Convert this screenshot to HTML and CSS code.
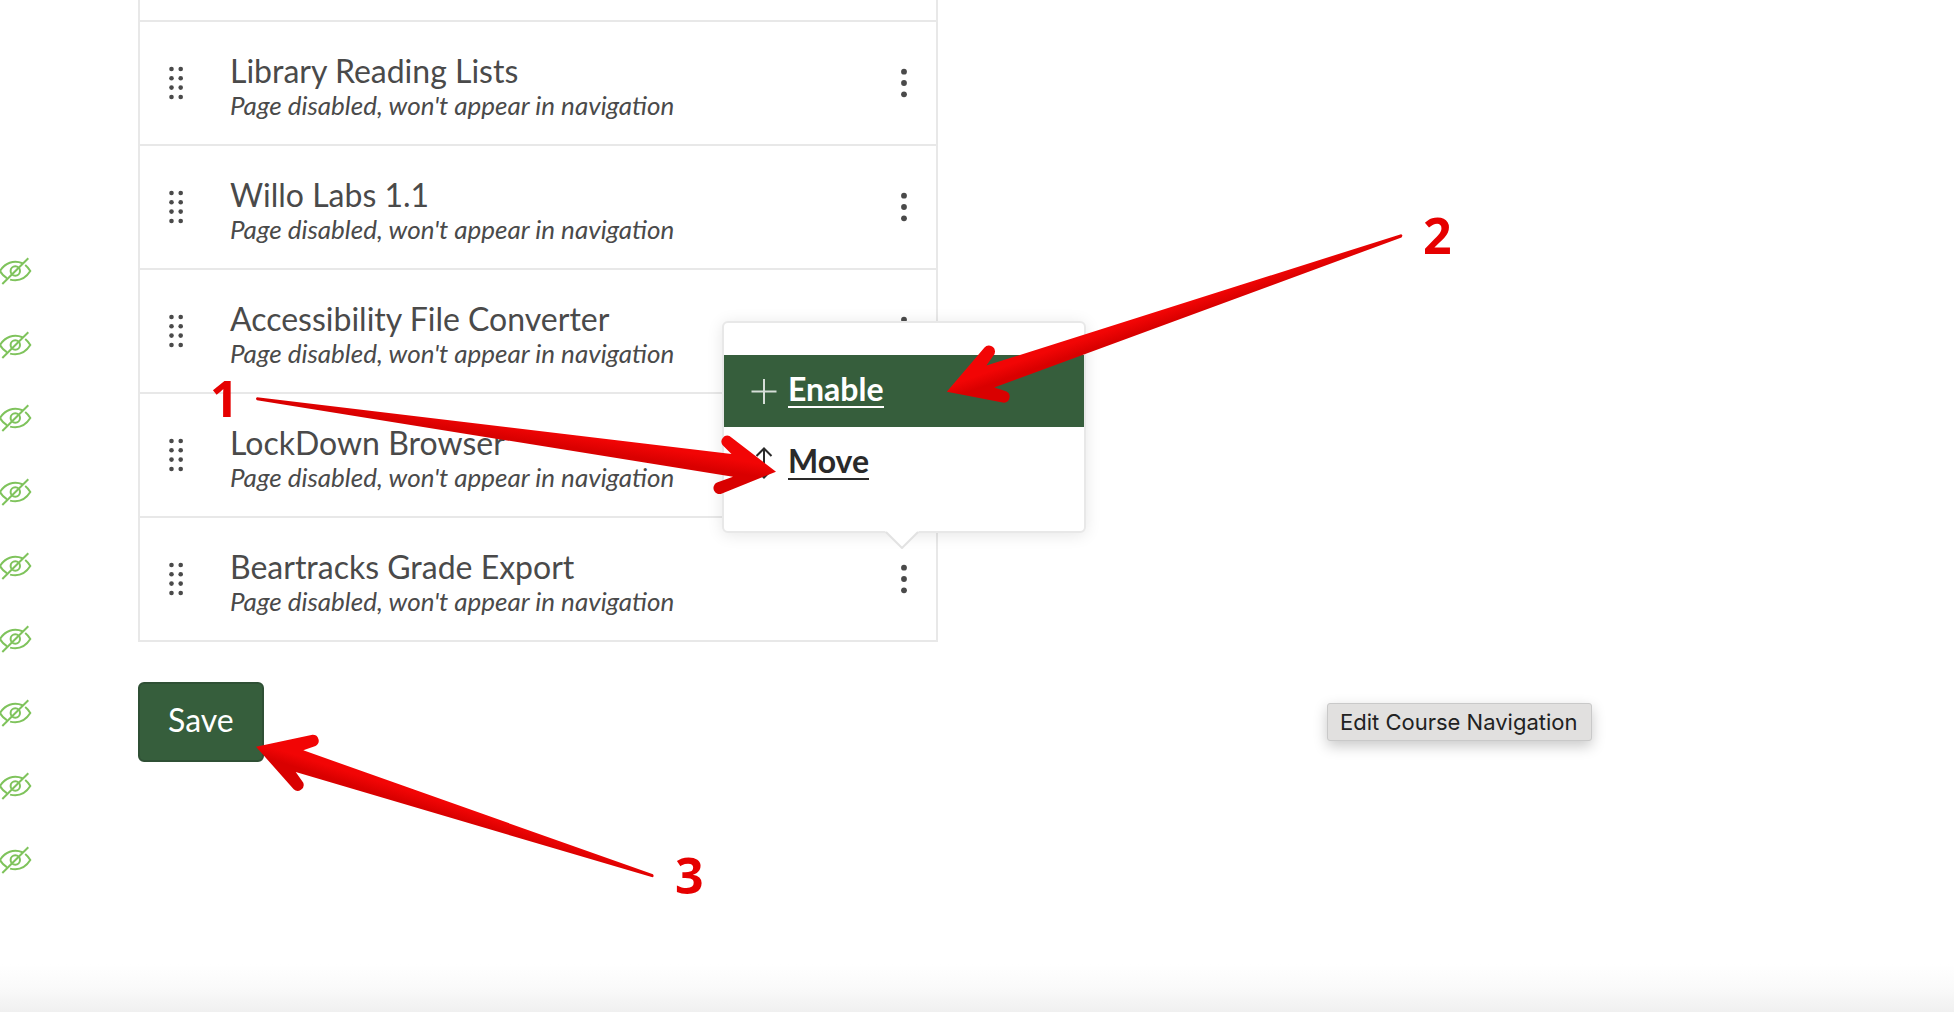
FILE: index.html
```html
<!DOCTYPE html>
<html lang="en">
<head>
<meta charset="utf-8">
<title>Course Navigation</title>
<link rel="stylesheet" href="styles.css">
</head>
<body>
<svg class="defs" aria-hidden="true">
  <symbol id="hidden-eye" viewBox="0 0 32 30">
    <path d="M22.500 7.200C13.500 3.600 5 7 0 15c1.600 2.900 4 5.400 6.800 7.200M25.200 9c2 1.600 3.700 3.700 5.100 6-4.800 7.600-12 10.600-20.200 8.600M2.300 28 28.300 2.300"/>
    <circle cx="15.300" cy="15" r="4.700"/>
  </symbol>
  <symbol id="drag" viewBox="0 0 16 34">
    <circle cx="3.500" cy="3" r="2.300"/><circle cx="12.700" cy="3" r="2.300"/>
    <circle cx="3.500" cy="12.300" r="2.300"/><circle cx="12.700" cy="12.300" r="2.300"/>
    <circle cx="3.500" cy="21.600" r="2.300"/><circle cx="12.700" cy="21.600" r="2.300"/>
    <circle cx="3.500" cy="31" r="2.300"/><circle cx="12.700" cy="31" r="2.300"/>
  </symbol>
  <symbol id="more" viewBox="0 0 8 32">
    <circle cx="4" cy="4.700" r="2.900"/><circle cx="4" cy="16" r="2.900"/><circle cx="4" cy="27.300" r="2.900"/>
  </symbol>
</svg>
<div class="page">
  <aside class="rail">
    <svg class="eye"><use href="#hidden-eye"/></svg>
    <svg class="eye"><use href="#hidden-eye"/></svg>
    <svg class="eye"><use href="#hidden-eye"/></svg>
    <svg class="eye"><use href="#hidden-eye"/></svg>
    <svg class="eye"><use href="#hidden-eye"/></svg>
    <svg class="eye"><use href="#hidden-eye"/></svg>
    <svg class="eye"><use href="#hidden-eye"/></svg>
    <svg class="eye"><use href="#hidden-eye"/></svg>
    <svg class="eye"><use href="#hidden-eye"/></svg>
  </aside>
  <main class="content">
    <ul class="nav-list">
      <li class="nav-item">
        <svg class="drag"><use href="#drag"/></svg>
        <div class="label"><span class="title">Library Reading Lists</span><em class="note">Page disabled, won't appear in navigation</em></div>
        <button class="more" type="button" aria-label="Settings for Library Reading Lists"><svg class="dots"><use href="#more"/></svg></button>
      </li>
      <li class="nav-item">
        <svg class="drag"><use href="#drag"/></svg>
        <div class="label"><span class="title">Willo Labs 1.1</span><em class="note">Page disabled, won't appear in navigation</em></div>
        <button class="more" type="button" aria-label="Settings for Willo Labs 1.1"><svg class="dots"><use href="#more"/></svg></button>
      </li>
      <li class="nav-item">
        <svg class="drag"><use href="#drag"/></svg>
        <div class="label"><span class="title">Accessibility File Converter</span><em class="note">Page disabled, won't appear in navigation</em></div>
        <button class="more" type="button" aria-label="Settings for Accessibility File Converter"><svg class="dots"><use href="#more"/></svg></button>
      </li>
      <li class="nav-item">
        <svg class="drag"><use href="#drag"/></svg>
        <div class="label"><span class="title">LockDown Browser</span><em class="note">Page disabled, won't appear in navigation</em></div>
        <button class="more" type="button" aria-label="Settings for LockDown Browser"><svg class="dots"><use href="#more"/></svg></button>
      </li>
      <li class="nav-item">
        <svg class="drag"><use href="#drag"/></svg>
        <div class="label"><span class="title">Beartracks Grade Export</span><em class="note">Page disabled, won't appear in navigation</em></div>
        <button class="more" type="button" aria-label="Settings for Beartracks Grade Export"><svg class="dots"><use href="#more"/></svg></button>
        <div class="menu">
          <a class="menu-item active" href="#enable">
            <svg class="menu-icon thin" viewBox="0 0 28 32"><path d="M14 4v25M1.500 16.500h25"/></svg>
            <span class="menu-text">Enable</span>
          </a>
          <a class="menu-item" href="#move">
            <svg class="menu-icon" viewBox="0 0 28 32"><path d="M14 1.500v29M6.500 9 14 1.500 21.500 9M6.500 23 14 30.500 21.500 23"/></svg>
            <span class="menu-text">Move</span>
          </a>
          <svg class="pointer" viewBox="0 0 34 18"><path class="pointer-fill" d="M0 0 17 17 34 0z"/><path class="pointer-line" d="M1 1 17 17 33 1"/></svg>
        </div>
      </li>
    </ul>
    <button class="save" type="button">Save</button>
  </main>
</div>
<div class="tooltip" role="tooltip">Edit Course Navigation</div>
<div class="bottom-fade"></div>
<svg class="annotations" width="1954" height="1012" viewBox="0 0 1954 1012">
  <defs>
    <linearGradient id="g1" gradientUnits="userSpaceOnUse" x1="744" y1="453" x2="740" y2="479"><stop offset=".3" stop-color="#f20505"/><stop offset=".8" stop-color="#d90000"/></linearGradient>
    <linearGradient id="g2" gradientUnits="userSpaceOnUse" x1="986" y1="365" x2="994" y2="388"><stop offset=".3" stop-color="#f20505"/><stop offset=".8" stop-color="#d90000"/></linearGradient>
    <linearGradient id="g3" gradientUnits="userSpaceOnUse" x1="303" y1="750" x2="296" y2="772"><stop offset=".3" stop-color="#f20505"/><stop offset=".8" stop-color="#d90000"/></linearGradient>
  </defs>
  <path fill="url(#g1)" d="M257 397.300 731.500 454 722.500 445A6 6 0 0 1 729.500 436L776 471.700 722 493.500A6 6 0 0 1 717 482.500L733 476.800 257 400.200Q255 398.700 257 397.300z"/>
  <path fill="url(#g2)" d="M1401 234.200 986.400 365.500 993.500 355.500A6 6 0 0 0 984.500 347.500L946.800 391.700 1004 402.800A6 6 0 0 0 1006 391.300L994.300 387.500 1401.500 237.500Q1403.500 235 1401 234.200z"/>
  <path fill="url(#g3)" d="M653 874.300 303.300 750.300 315.500 746A6 6 0 0 0 312.500 734.700L256 746.700 293.700 789.300A6 6 0 0 0 303.300 782.800L295.700 772 652.500 877.300Q654.500 876.500 653 874.300z"/>
  <text class="step" x="210" y="417">1</text>
  <text class="step" x="1423" y="254">2</text>
  <text class="step" x="675" y="894">3</text>
</svg>
</body>
</html>
```
FILE: styles.css
```css
* { box-sizing: border-box; }

body {
  margin: 0;
  min-height: 100vh;
  position: relative;
  overflow: hidden;
  background: #fff;
  color: #4a4a4a;
  font-family: Lato, "Liberation Sans", sans-serif;
  font-size: 32px;
}

svg { display: block; }

.defs {
  position: absolute;
  width: 0;
  height: 0;
}

.page {
  display: flex;
  align-items: flex-start;
}

.rail {
  flex: 0 0 138px;
  display: flex;
  flex-direction: column;
  justify-content: space-between;
  height: 875px;
  padding-top: 256px;
}

.eye {
  width: 32px;
  height: 30px;
  fill: none;
  stroke: #7fc35c;
  stroke-width: 2;
}

.content {
  flex: 1;
  min-width: 0;
}

.nav-list {
  max-width: 800px;
  margin: 0;
  padding: 20px 0 0;
  list-style: none;
  border: 2px solid #e8e8e8;
  border-top: 0;
}

.nav-item {
  position: relative;
  display: flex;
  align-items: center;
  height: 124px;
  padding: 0 20px 0 28px;
  border-top: 2px solid #e8e8e8;
}

.drag {
  width: 16px;
  height: 34px;
  margin-right: 46px;
  fill: #4a4a4a;
}

.label {
  flex: 1;
  display: flex;
  flex-direction: column;
  padding-top: 8px;
}

.title { line-height: 36px; }

.note {
  font-size: 26px;
  line-height: 32px;
}

.more {
  padding: 0 8px;
  border: 0;
  background: none;
}

.dots {
  width: 8px;
  height: 32px;
  fill: #4a4a4a;
}

.menu {
  position: absolute;
  z-index: 1;
  right: -150px;
  bottom: 107px;
  width: 364px;
  padding: 32px 0;
  background: #fff;
  border: 2px solid #e8e8e8;
  border-radius: 6px;
  box-shadow: 0 2px 16px rgba(0, 0, 0, .1);
}

.menu-item {
  display: flex;
  align-items: center;
  gap: 10px;
  height: 72px;
  padding-left: 26px;
  color: #2a2a2a;
  font-weight: 700;
  text-decoration: none;
}

.menu-item.active {
  background: #365e3c;
  color: #fff;
}

.menu-icon {
  width: 28px;
  height: 32px;
  fill: none;
  stroke: currentColor;
  stroke-width: 2;
}

.menu-icon.thin { opacity: .8; }

.menu-text {
  padding-bottom: 2px;
  line-height: 30px;
  border-bottom: 2px solid currentColor;
}

.pointer {
  position: absolute;
  top: 100%;
  right: 165px;
  width: 34px;
  height: 18px;
}

.pointer-fill { fill: #fff; }

.pointer-line {
  fill: none;
  stroke: #e2e2e2;
  stroke-width: 2;
}

.save {
  height: 80px;
  margin-top: 40px;
  padding: 0 28px 6px;
  border: 2px solid #2f5035;
  border-radius: 6px;
  background: #365e3c;
  color: #fff;
  font: inherit;
}

.tooltip {
  position: absolute;
  left: 1327px;
  top: 703px;
  padding: 0 14px 0 12px;
  border: 1px solid #c9c9c9;
  border-radius: 3px;
  background: #e1e0df;
  box-shadow: 0 5px 14px rgba(0, 0, 0, .22);
  color: #222;
  font: 22px/36px Inter, "Liberation Sans", sans-serif;
}

.bottom-fade {
  position: absolute;
  right: 0;
  bottom: 0;
  left: 0;
  height: 48px;
  background: linear-gradient(#fff, #fafafa 50%, #f0f0f0);
}

.annotations {
  position: absolute;
  z-index: 2;
  top: 0;
  left: 0;
  pointer-events: none;
}

.step {
  fill: #e60000;
  font: 700 50px "Open Sans", "Noto Sans", sans-serif;
}
```
